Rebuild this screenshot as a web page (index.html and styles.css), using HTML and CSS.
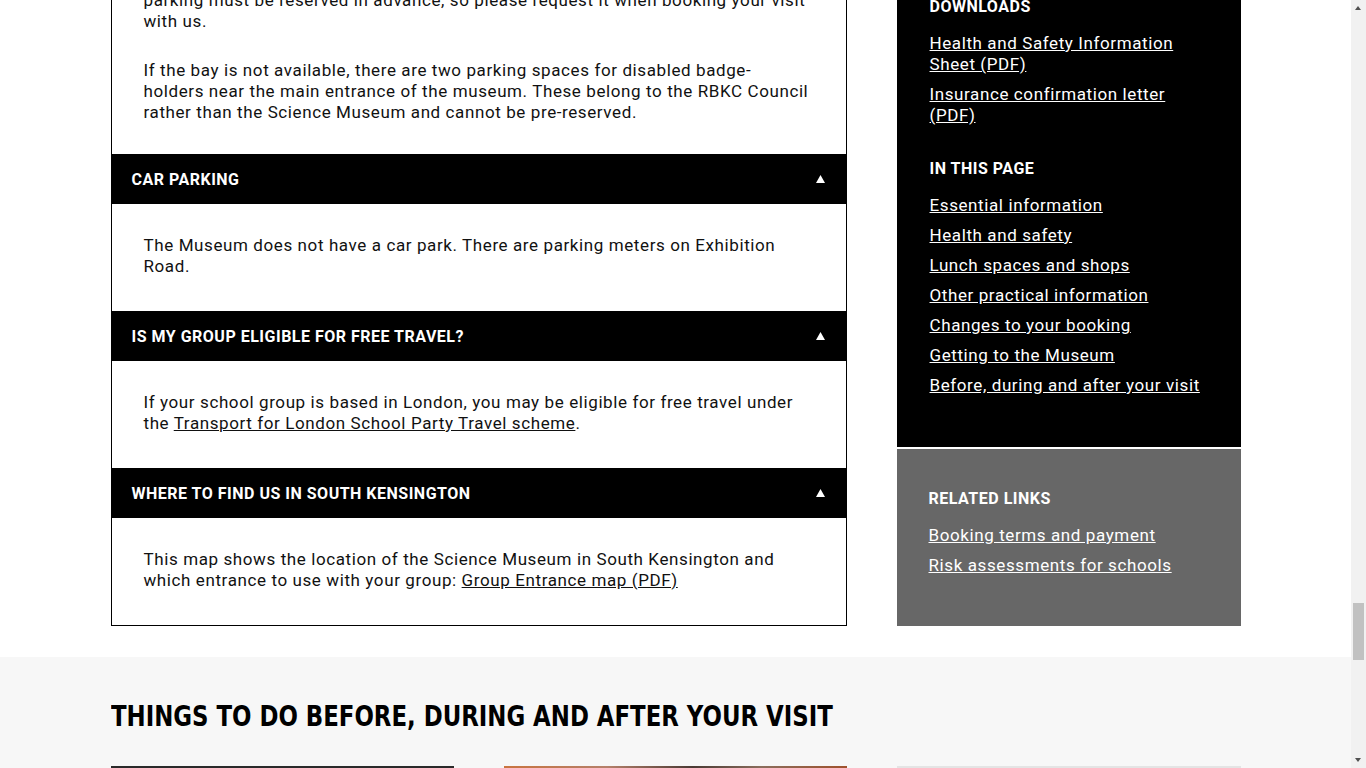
FILE: index.html
```html
<!DOCTYPE html>
<html lang="en">
<head>
<meta charset="utf-8">
<title>Plan your school visit</title>
<link rel="stylesheet" href="styles.css">
</head>
<body>
<div class="page">
  <div class="container columns">
    <div class="accordion">
      <div class="panel panel--intro">
        <p>parking must be reserved in advance, so please request it when booking your visit with us.</p>
        <p>If the bay is not available, there are two parking spaces for disabled badge-holders near the main entrance of the museum. These belong to the RBKC Council rather than the Science Museum and cannot be pre-reserved.</p>
      </div>
      <div class="acc-head"><span>Car parking</span><svg class="tri" width="9" height="8" viewBox="0 0 9 8"><polygon points="4.5,0 9,8 0,8"/></svg></div>
      <div class="panel">
        <p>The Museum does not have a car park. There are parking meters on Exhibition Road.</p>
      </div>
      <div class="acc-head"><span>Is my group eligible for free travel?</span><svg class="tri" width="9" height="8" viewBox="0 0 9 8"><polygon points="4.5,0 9,8 0,8"/></svg></div>
      <div class="panel">
        <p>If your school group is based in London, you may be eligible for free travel under the <a href="#">Transport for London School Party Travel scheme</a>.</p>
      </div>
      <div class="acc-head"><span>Where to find us in South Kensington</span><svg class="tri" width="9" height="8" viewBox="0 0 9 8"><polygon points="4.5,0 9,8 0,8"/></svg></div>
      <div class="panel">
        <p>This map shows the location of the Science Museum in South Kensington and which entrance to use with your group: <a href="#">Group Entrance map (PDF)</a></p>
      </div>
    </div>
    <aside class="sidebar">
      <div class="side-box side-box--dark">
        <section class="side-section">
          <h3>Downloads</h3>
          <ul class="side-links">
            <li><a href="#">Health and Safety Information Sheet (PDF)</a></li>
            <li><a href="#">Insurance confirmation letter (PDF)</a></li>
          </ul>
        </section>
        <section class="side-section">
          <h3>In this page</h3>
          <ul class="side-links">
            <li><a href="#">Essential information</a></li>
            <li><a href="#">Health and safety</a></li>
            <li><a href="#">Lunch spaces and shops</a></li>
            <li><a href="#">Other practical information</a></li>
            <li><a href="#">Changes to your booking</a></li>
            <li><a href="#">Getting to the Museum</a></li>
            <li><a href="#">Before, during and after your visit</a></li>
          </ul>
        </section>
      </div>
      <div class="side-box side-box--grey">
        <section class="side-section">
          <h3>Related links</h3>
          <ul class="side-links">
            <li><a href="#">Booking terms and payment</a></li>
            <li><a href="#">Risk assessments for schools</a></li>
          </ul>
        </section>
      </div>
    </aside>
  </div>
  <section class="things">
    <div class="container">
      <h2>Things to do before, during and after your visit</h2>
      <div class="cards">
        <div class="card card--dark"></div>
        <div class="card card--photo"></div>
        <div class="card card--light"></div>
      </div>
    </div>
  </section>
</div>
<div class="scrollbar">
  <span class="sb-arrow sb-arrow--up"></span>
  <span class="sb-thumb"></span>
  <span class="sb-arrow sb-arrow--down"></span>
</div>
</body>
</html>
```

FILE: styles.css
```css
html {
  overflow: hidden;
}

body {
  margin: 0;
  background: #fff;
  color: #111;
  font-family: Roboto, "Liberation Sans", Arial, sans-serif;
  font-size: 17px;
  line-height: 21px;
  letter-spacing: 0.6px;
}

.page {
  width: calc(100% - 15px);
  margin-top: -40px;
}

.container {
  width: 1130px;
  margin: 0 auto;
}

.columns {
  display: flex;
  gap: 50px;
  align-items: flex-start;
}

/* Accordion */
.accordion {
  flex: none;
  width: 736px;
  box-sizing: border-box;
  border: 1px solid #000;
}

.panel {
  padding: 31px 36px 34px 32px;
}

.panel--intro {
  padding-top: 29px;
  padding-bottom: 31px;
}

.panel p {
  margin: 0 0 28px;
}

.panel p:last-child {
  margin-bottom: 0;
}

.panel a {
  color: inherit;
  text-decoration: underline;
}

.acc-head {
  display: flex;
  align-items: center;
  justify-content: space-between;
  height: 50px;
  padding: 0 21px 0 20px;
  background: #000;
  color: #fff;
  font-weight: 700;
  font-size: 16px;
  letter-spacing: 0.5px;
  text-transform: uppercase;
}

.tri {
  display: block;
  fill: #fff;
}

/* Sidebar */
.sidebar {
  flex: none;
  width: 344px;
}

.side-box {
  color: #fff;
}

.side-box--dark {
  background: #000;
  padding: 37px 33px 51px;
}

.side-box--grey {
  background: #676767;
  margin-top: 2px;
  padding: 40px 32px 50px;
}

.side-section + .side-section {
  margin-top: 33px;
}

.side-section h3 {
  margin: 0 0 16px;
  font-size: 16px;
  line-height: 20px;
  font-weight: 700;
  letter-spacing: 0.5px;
  text-transform: uppercase;
}

.side-links {
  list-style: none;
  margin: 0;
  padding: 0;
}

.side-links li + li {
  margin-top: 9px;
}

.side-links a {
  color: #fff;
  text-decoration: underline;
}

/* Things to do */
.things {
  margin-top: 31px;
  background: #f7f7f7;
  padding-top: 43px;
}

.things h2 {
  margin: 0 0 32px;
  font-family: "DejaVu Sans Condensed", "Liberation Sans Narrow", sans-serif;
  font-weight: 700;
  font-size: 28px;
  line-height: 34px;
  letter-spacing: 0;
  text-transform: uppercase;
  color: #000;
  transform: scaleX(0.907);
  transform-origin: left center;
  white-space: nowrap;
}

.cards {
  display: grid;
  grid-template-columns: repeat(3, 1fr);
  gap: 50px;
}

.card {
  height: 240px;
}

.card--dark {
  background: #2a2a2a;
}

.card--photo {
  background: linear-gradient(90deg, #c9743f 0%, #b5806a 30%, #4a3a34 55%, #8a6d5c 75%, #a0522d 100%);
}

.card--light {
  background: #e4e4e4;
}

/* Fake scrollbar (page is shown scrolled) */
.scrollbar {
  position: fixed;
  top: 0;
  right: 0;
  width: 15px;
  height: 100%;
  background: #f1f1f1;
}

.sb-arrow {
  position: absolute;
  left: 4px;
  width: 0;
  height: 0;
  border-left: 3.5px solid transparent;
  border-right: 3.5px solid transparent;
}

.sb-arrow--up {
  top: 6px;
  border-bottom: 4px solid #505050;
}

.sb-arrow--down {
  bottom: 6px;
  border-top: 4px solid #505050;
}

.sb-thumb {
  position: absolute;
  left: 2px;
  top: 603px;
  width: 11px;
  height: 57px;
  background: #c1c1c1;
}
```
